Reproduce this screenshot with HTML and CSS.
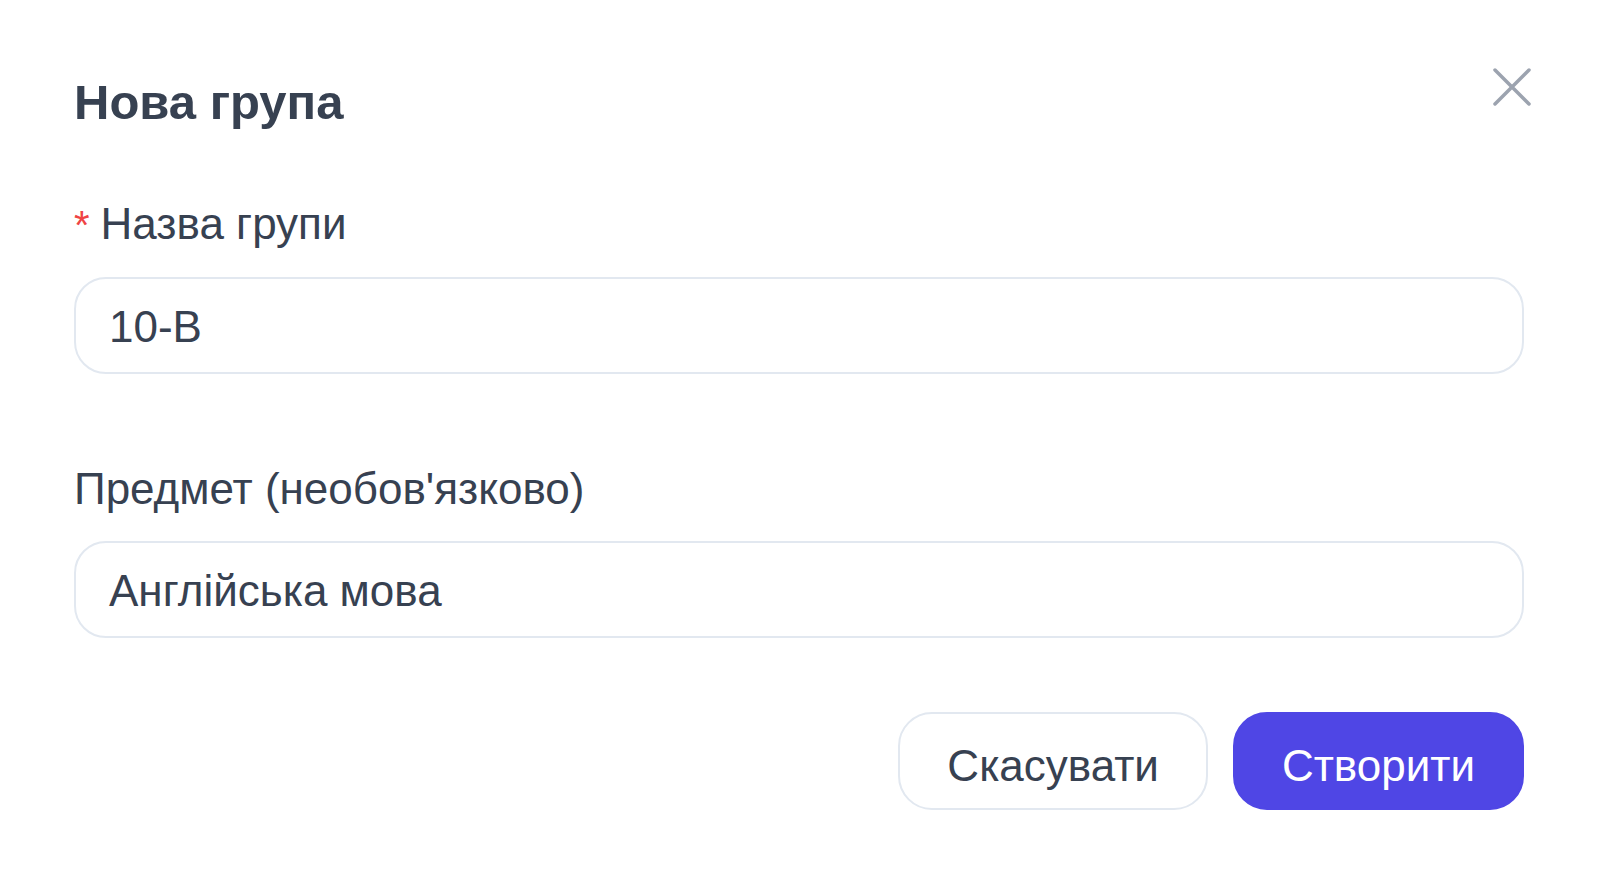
FILE: index.html
```html
<!DOCTYPE html>
<html lang="uk">
<head>
<meta charset="utf-8">
<title>Нова група</title>
<link rel="stylesheet" href="styles.css">
</head>
<body>
<div class="modal">
  <div class="modal-header">
    <h2 class="modal-title">Нова група</h2>
    <button class="close-btn" type="button" aria-label="Закрити">
      <svg viewBox="0 0 38 38" width="38" height="38"><path d="M2 2L36 36M36 2L2 36" stroke="currentColor" stroke-width="3.5" stroke-linecap="round" fill="none"/></svg>
    </button>
  </div>
  <div class="field">
    <label class="field-label"><span class="req">*</span>Назва групи</label>
    <div class="input">10-В</div>
  </div>
  <div class="field">
    <label class="field-label">Предмет (необов'язково)</label>
    <div class="input">Англійська мова</div>
  </div>
  <div class="actions">
    <button class="btn btn-cancel" type="button">Скасувати</button>
    <button class="btn btn-primary" type="button">Створити</button>
  </div>
</div>
</body>
</html>
```
FILE: styles.css
```css
html, body {
  margin: 0;
  padding: 0;
  background: #ffffff;
}
body {
  font-family: "Liberation Sans", Arial, sans-serif;
  color: #374151;
}
.modal {
  padding: 74px 76px 0 74px;
}
.modal-header {
  display: flex;
  justify-content: space-between;
  align-items: flex-start;
}
.modal-title {
  margin: 0;
  font-size: 49px;
  line-height: 56px;
  font-weight: 700;
  color: #374151;
}
.close-btn {
  background: none;
  border: none;
  padding: 0;
  margin: -6px -7px 0 0;
  width: 38px;
  height: 38px;
  color: #9ca3af;
  cursor: pointer;
}
.close-btn svg {
  display: block;
}
.field {
  display: flex;
  flex-direction: column;
}
.modal-header + .field {
  margin-top: 67px;
}
.field + .field {
  margin-top: 88px;
}
.field-label {
  font-size: 44px;
  line-height: 54px;
  color: #374151;
  margin-bottom: 25px;
}
.req {
  color: #ef4444;
  font-size: 40px;
  margin-right: 11px;
}
.input {
  box-sizing: border-box;
  height: 97px;
  border: 2px solid #e2e8f0;
  border-radius: 32px;
  padding: 2px 33px 0;
  display: flex;
  align-items: center;
  font-size: 44px;
  color: #374151;
}
.actions {
  display: flex;
  justify-content: flex-end;
  gap: 25px;
  margin-top: 74px;
}
.btn {
  box-sizing: border-box;
  height: 98px;
  padding: 10px 47px 0;
  border-radius: 34px;
  font-family: "Liberation Sans", Arial, sans-serif;
  font-size: 44px;
  cursor: pointer;
}
.btn-cancel {
  background: #ffffff;
  border: 2px solid #e2e8f0;
  color: #374151;
}
.btn-primary {
  background: #4f46e5;
  border: 2px solid #4f46e5;
  color: #ffffff;
}
```
